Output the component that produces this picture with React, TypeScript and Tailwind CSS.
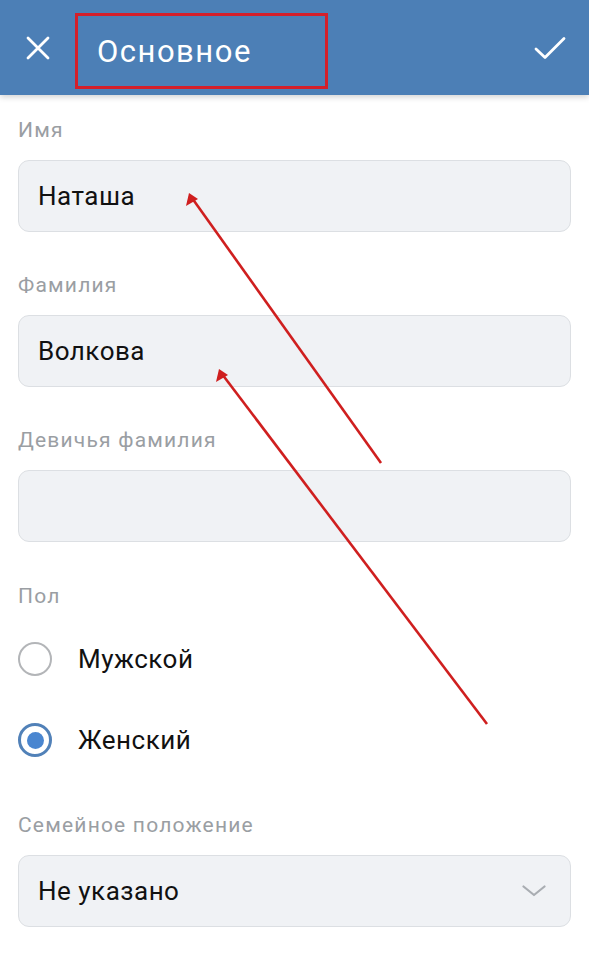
import React from "react";

const font = { fontFamily: "Roboto, 'Noto Sans', sans-serif" };

function Label({ children }: { children: React.ReactNode }) {
  return (
    <div className="h-[30px] flex items-center text-[21px] tracking-[1.2px] text-[#9a9ea3] leading-none">
      {children}
    </div>
  );
}

function Field({ value, chevron }: { value?: string; chevron?: boolean }) {
  return (
    <div className="h-[72px] rounded-[11px] bg-[#f0f2f5] border border-[#dcdfe3] flex items-center pl-[19px] pr-[24px] justify-between">
      <span className="text-[26px] tracking-[0.5px] text-[#111] leading-none">{value}</span>
      {chevron && (
        <svg width="24" height="12" viewBox="0 0 24 12" fill="none">
          <path d="M1.5 1.5 L12 10 L22.5 1.5" stroke="#a9adb2" strokeWidth="2.2" strokeLinecap="round" strokeLinejoin="round" />
        </svg>
      )}
    </div>
  );
}

export default function App() {
  return (
    <div className="relative w-[589px] h-[954px] bg-white overflow-hidden" style={font}>
      <div className="h-[95px] bg-[#4c7fb6] flex items-start shadow-[0_2px_6px_rgba(0,0,0,0.18)] relative z-10">
        <div className="w-[75px] h-[95px] flex items-center justify-center">
          <svg width="24" height="24" viewBox="0 0 24 24" fill="none">
            <path d="M2 2 L22 22 M22 2 L2 22" stroke="white" strokeWidth="2.8" strokeLinecap="round" />
          </svg>
        </div>
        <div className="w-[253px] h-[76px] mt-[13px] border-[3px] border-[#d41f2a] flex items-center pl-[19px]">
          <span className="text-[31px] tracking-[1.5px] text-white leading-none">Основное</span>
        </div>
        <div className="flex-1" />
        <div className="pr-[23px] h-[95px] flex items-center">
          <svg width="32" height="24" viewBox="0 0 32 24" fill="none">
            <path d="M2 13 L11 21.5 L30 2.5" stroke="white" strokeWidth="2.8" strokeLinecap="round" strokeLinejoin="round" />
          </svg>
        </div>
      </div>

      <div className="px-[18px] pt-[20px] flex flex-col">
        <Label>Имя</Label>
        <div className="mt-[15px]"><Field value="Наташа" /></div>
        <div className="mt-[38px]"><Label>Фамилия</Label></div>
        <div className="mt-[15px]"><Field value="Волкова" /></div>
        <div className="mt-[38px]"><Label>Девичья фамилия</Label></div>
        <div className="mt-[15px]"><Field /></div>
        <div className="mt-[39px]"><Label>Пол</Label></div>

        <div className="mt-[30px] flex items-center h-[36px]">
          <div className="w-[34px] h-[34px] rounded-full border-[2.5px] border-[#b3b5b8]" />
          <span className="ml-[26px] text-[26px] tracking-[0.5px] text-[#111] leading-none">Мужской</span>
        </div>
        <div className="mt-[45px] flex items-center h-[36px]">
          <div className="w-[34px] h-[34px] rounded-full border-[3px] border-[#5181b8] flex items-center justify-center">
            <div className="w-[17px] h-[17px] rounded-full bg-[#4a86d0]" />
          </div>
          <span className="ml-[26px] text-[26px] tracking-[0.5px] text-[#111] leading-none">Женский</span>
        </div>

        <div className="mt-[52px]"><Label>Семейное положение</Label></div>
        <div className="mt-[15px]"><Field value="Не указано" chevron /></div>
      </div>

      <svg className="absolute inset-0 pointer-events-none" width="589" height="954" viewBox="0 0 589 954">
        <line x1="381" y1="463" x2="192" y2="198" stroke="#cf1f1f" strokeWidth="2.6" />
        <path d="M189 193 L186 206 L198 199 Z" fill="#cf1f1f" />
        <line x1="487" y1="724" x2="222" y2="374" stroke="#cf1f1f" strokeWidth="2.6" />
        <path d="M219 369 L216 382 L228 375 Z" fill="#cf1f1f" />
      </svg>
    </div>
  );
}
